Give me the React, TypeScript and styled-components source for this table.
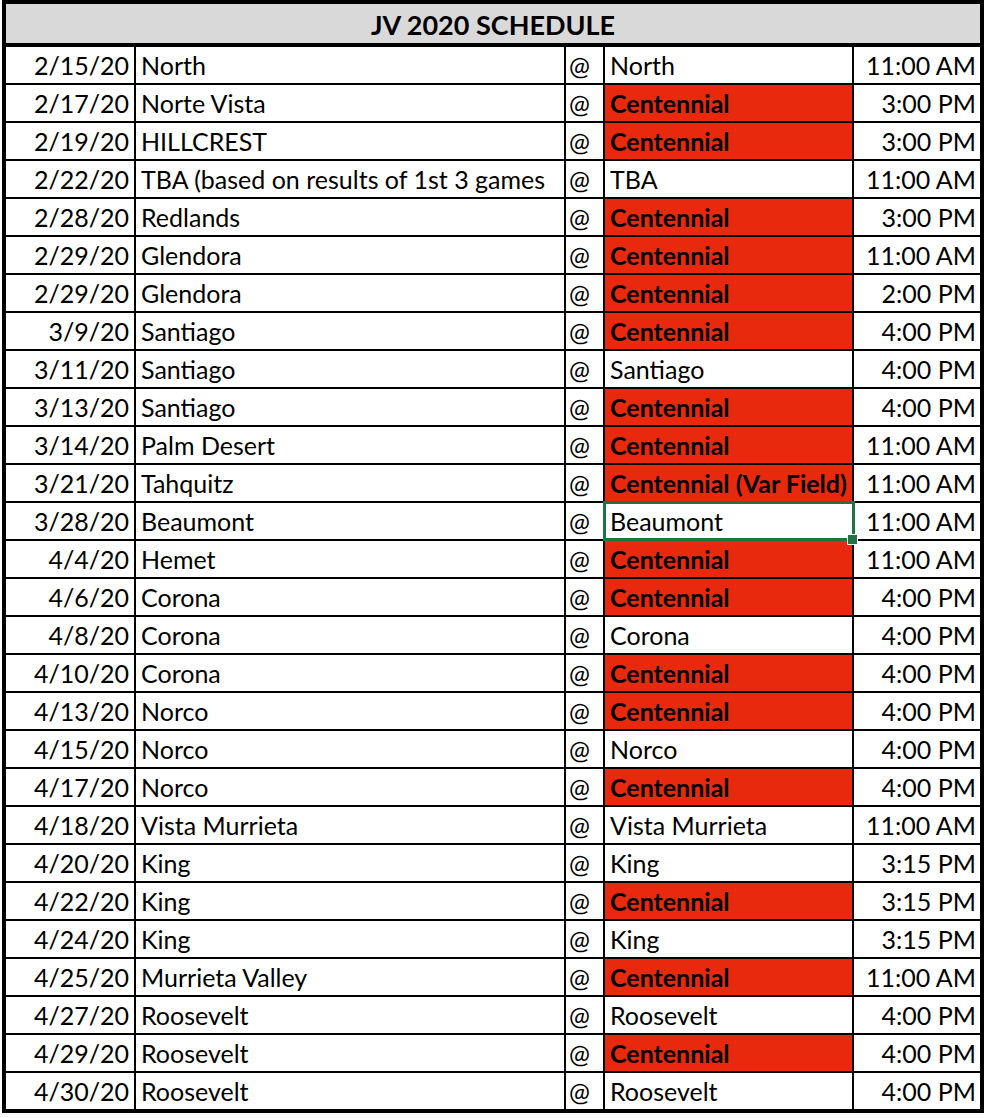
import React from 'react';
import styled, { createGlobalStyle } from "styled-components";

interface Game {
    date: string;
    opponent: string;
    location: string;
    home: boolean;
    time: string;
    selected?: boolean;
}

const games: Game[] = [
    { date: '2/15/20', opponent: 'North', location: 'North', home: false, time: '11:00 AM' },
    { date: '2/17/20', opponent: 'Norte Vista', location: 'Centennial', home: true, time: '3:00 PM' },
    { date: '2/19/20', opponent: 'HILLCREST', location: 'Centennial', home: true, time: '3:00 PM' },
    { date: '2/22/20', opponent: 'TBA (based on results of 1st 3 games', location: 'TBA', home: false, time: '11:00 AM' },
    { date: '2/28/20', opponent: 'Redlands', location: 'Centennial', home: true, time: '3:00 PM' },
    { date: '2/29/20', opponent: 'Glendora', location: 'Centennial', home: true, time: '11:00 AM' },
    { date: '2/29/20', opponent: 'Glendora', location: 'Centennial', home: true, time: '2:00 PM' },
    { date: '3/9/20', opponent: 'Santiago', location: 'Centennial', home: true, time: '4:00 PM' },
    { date: '3/11/20', opponent: 'Santiago', location: 'Santiago', home: false, time: '4:00 PM' },
    { date: '3/13/20', opponent: 'Santiago', location: 'Centennial', home: true, time: '4:00 PM' },
    { date: '3/14/20', opponent: 'Palm Desert', location: 'Centennial', home: true, time: '11:00 AM' },
    { date: '3/21/20', opponent: 'Tahquitz', location: 'Centennial (Var Field)', home: true, time: '11:00 AM' },
    { date: '3/28/20', opponent: 'Beaumont', location: 'Beaumont', home: false, time: '11:00 AM', selected: true },
    { date: '4/4/20', opponent: 'Hemet', location: 'Centennial', home: true, time: '11:00 AM' },
    { date: '4/6/20', opponent: 'Corona', location: 'Centennial', home: true, time: '4:00 PM' },
    { date: '4/8/20', opponent: 'Corona', location: 'Corona', home: false, time: '4:00 PM' },
    { date: '4/10/20', opponent: 'Corona', location: 'Centennial', home: true, time: '4:00 PM' },
    { date: '4/13/20', opponent: 'Norco', location: 'Centennial', home: true, time: '4:00 PM' },
    { date: '4/15/20', opponent: 'Norco', location: 'Norco', home: false, time: '4:00 PM' },
    { date: '4/17/20', opponent: 'Norco', location: 'Centennial', home: true, time: '4:00 PM' },
    { date: '4/18/20', opponent: 'Vista Murrieta', location: 'Vista Murrieta', home: false, time: '11:00 AM' },
    { date: '4/20/20', opponent: 'King', location: 'King', home: false, time: '3:15 PM' },
    { date: '4/22/20', opponent: 'King', location: 'Centennial', home: true, time: '3:15 PM' },
    { date: '4/24/20', opponent: 'King', location: 'King', home: false, time: '3:15 PM' },
    { date: '4/25/20', opponent: 'Murrieta Valley', location: 'Centennial', home: true, time: '11:00 AM' },
    { date: '4/27/20', opponent: 'Roosevelt', location: 'Roosevelt', home: false, time: '4:00 PM' },
    { date: '4/29/20', opponent: 'Roosevelt', location: 'Centennial', home: true, time: '4:00 PM' },
    { date: '4/30/20', opponent: 'Roosevelt', location: 'Roosevelt', home: false, time: '4:00 PM' },
];

const GlobalStyle = createGlobalStyle`
  body {
    margin: 0;
    background: #fff;
    font-family: Lato, "Open Sans", sans-serif;
  }
`;

const Page = styled.div`
  width: 986px;
  height: 1118px;
  padding: 0 0 0 2px;
  box-sizing: border-box;
  background: #fff;
`;

const Sheet = styled.div`
  width: 982px;
  box-sizing: border-box;
  border: 4px solid #000;
  background: #000;
`;

const Title = styled.div`
  height: 39px;
  background: #d9d9d9;
  display: flex;
  align-items: flex-end;
  justify-content: center;
  padding-bottom: 5px;
  box-sizing: border-box;
  margin-bottom: 4px;
  font-size: 27px;
  font-weight: 700;
  line-height: 1;
  color: #000;
`;

const Grid = styled.div`
  display: grid;
  grid-template-columns: 128px 428px 37px 247px 126px;
  grid-auto-rows: 36px;
  gap: 2px;
`;

const Cell = styled.div<{ $align?: 'left' | 'right'; $red?: boolean; $pad?: number }>`
  position: relative;
  background: ${ p => p.$red ? '#e9290d' : '#fff' };
  display: flex;
  align-items: flex-end;
  justify-content: ${ p => p.$align === 'right' ? 'flex-end' : 'flex-start' };
  padding: 0 ${ p => p.$align === 'right' ? p.$pad ?? 5 : 0 }px 5px ${ p => p.$align === 'right' ? 0 : p.$pad ?? 5 }px;
  font-size: 25px;
  font-weight: ${ p => p.$red ? 700 : 400 };
  line-height: 1;
  color: #000;
  white-space: nowrap;
  overflow: hidden;
`;

const Selection = styled.div`
  position: absolute;
  left: -2px;
  top: -2px;
  right: -3px;
  bottom: -2px;
  border: 3px solid #217346;
  pointer-events: none;
  z-index: 2;
`;

const Handle = styled.div`
  position: absolute;
  right: -6px;
  bottom: -6px;
  width: 9px;
  height: 9px;
  background: #217346;
  border: 1px solid #fff;
  z-index: 3;
`;

const SelectedWrap = styled.div`
  position: relative;
  display: flex;
`;

const App = () => {
    return (
        <Page>
            <GlobalStyle/>
            <Sheet>
                <Title>JV 2020 SCHEDULE</Title>
                <Grid>
                    { games.map((g, i) => (
                        <React.Fragment key={ i }>
                            <Cell $align='right'>{ g.date }</Cell>
                            <Cell>{ g.opponent }</Cell>
                            <Cell $pad={ 3 }>@</Cell>
                            { g.selected ? (
                                <SelectedWrap>
                                    <Cell style={ { flex: 1 } }>{ g.location }</Cell>
                                    <Selection/>
                                    <Handle/>
                                </SelectedWrap>
                            ) : (
                                <Cell $red={ g.home }>{ g.location }</Cell>
                            ) }
                            <Cell $align='right' $pad={ 4 }>{ g.time }</Cell>
                        </React.Fragment>
                    )) }
                </Grid>
            </Sheet>
        </Page>
    );
};

export default App;
